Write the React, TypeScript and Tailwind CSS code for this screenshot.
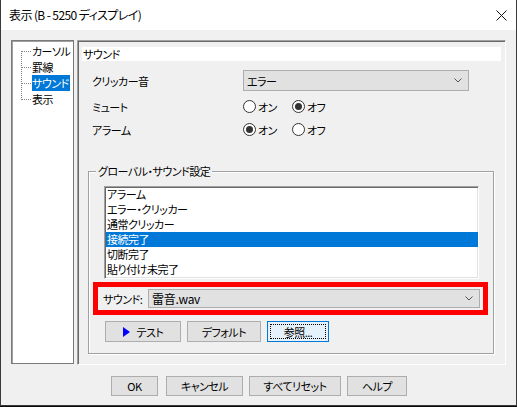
import React from "react";

function Chevron() {
  return (
    <svg width="8" height="5" viewBox="0 0 8 5" className="shrink-0">
      <polyline points="0.5,0.5 4,4 7.5,0.5" fill="none" stroke="#555" strokeWidth="1" />
    </svg>
  );
}

function Radio({ checked, label }: { checked: boolean; label: string }) {
  return (
    <div className="flex items-center w-[49px] shrink-0">
      <span className="w-[13px] h-[13px] rounded-full border border-[#333] bg-white flex items-center justify-center shrink-0">
        {checked && <span className="w-[7px] h-[7px] rounded-full bg-[#333]" />}
      </span>
      <span className="ml-[2px] leading-[14px] whitespace-nowrap">{label}</span>
    </div>
  );
}

function TreeRow({ label, pos, selected }: { label: string; pos: "first" | "mid" | "last"; selected?: boolean }) {
  const y1 = pos === "first" ? 8 : 0;
  const y2 = pos === "last" ? 9 : 16;
  return (
    <div className="flex items-center h-[16px]">
      <svg width="19" height="16" viewBox="0 0 19 16" className="shrink-0" shapeRendering="crispEdges">
        <line x1="8.5" y1={y1} x2="8.5" y2={y2} stroke="#808080" strokeDasharray="1 1" />
        <line x1="9" y1="8.5" x2="19" y2="8.5" stroke="#808080" strokeDasharray="1 1" />
      </svg>
      <span
        className={
          "h-[16px] leading-[16px] whitespace-nowrap pr-[1px] " +
          (selected ? "bg-[#0078d7] text-white" : "")
        }
      >
        {label}
      </span>
    </div>
  );
}

function Btn({ w, children, className }: { w: string; children: React.ReactNode; className?: string }) {
  return (
    <div
      className={
        "h-[20px] border border-[#adadad] bg-[#e1e1e1] flex items-center justify-center leading-[14px] whitespace-nowrap shrink-0 " +
        w +
        " " +
        (className ?? "")
      }
    >
      {children}
    </div>
  );
}

export default function App() {
  const listItems = ["アラーム", "エラー・クリッカー", "通常クリッカー", "接続完了", "切断完了", "貼り付け未完了"];
  return (
    <div className="w-[517px] h-[407px] bg-[#0b0b0b] overflow-hidden font-['Noto_Sans_CJK_JP',sans-serif] text-[11px] tracking-[-0.5px] text-black [font-feature-settings:'palt'_1]">
      <div className="h-[406px] flex flex-col bg-[#f0f0f0] border-x border-b border-[#3a3a3a]">
        {/* title bar */}
        <div className="h-[30px] bg-white flex items-center pl-[8px] pr-[9px] shrink-0">
          <span className="leading-[14px] flex-1 whitespace-nowrap text-[12px] tracking-[-0.6px]">表示 (B - 5250 ディスプレイ)</span>
          <svg width="11" height="11" viewBox="0 0 11 11">
            <line x1="0.5" y1="0.5" x2="10.5" y2="10.5" stroke="#111" strokeWidth="1" />
            <line x1="10.5" y1="0.5" x2="0.5" y2="10.5" stroke="#111" strokeWidth="1" />
          </svg>
        </div>

        {/* body */}
        <div className="flex pt-[10px] px-[10px] gap-[3px]">
          {/* tree */}
          <div className="w-[63px] h-[324px] bg-white border border-[#7a7a7a] shadow-[inset_1px_1px_0_#a0a0a0] pt-[2px] pl-[1px] shrink-0 overflow-hidden">
            <TreeRow label="カーソル" pos="first" />
            <TreeRow label="罫線" pos="mid" />
            <TreeRow label="サウンド" pos="mid" selected />
            <TreeRow label="表示" pos="last" />
          </div>

          {/* panel */}
          <div className="w-[429px] h-[325px] border border-t-[#a0a0a0] border-l-[#a0a0a0] border-r-white border-b-white shadow-[inset_1px_1px_0_#696969] px-[4px] pt-[6px] shrink-0 flex flex-col">
            <div className="h-[14px] bg-white leading-[14px] pl-[1px]">サウンド</div>

            <div className="flex items-center h-[21px] mt-[9px] pl-[10px]">
              <span className="w-[151px] leading-[14px] shrink-0">クリッカー音</span>
              <div className="w-[226px] h-[21px] border border-[#adadad] bg-[#e1e1e1] flex items-center pl-[3px] pr-[6px]">
                <span className="flex-1 leading-[14px]">エラー</span>
                <Chevron />
              </div>
            </div>

            <div className="flex items-center h-[21px] mt-[5px] pl-[10px]">
              <span className="w-[151px] leading-[14px] shrink-0">ミュート</span>
              <Radio checked={false} label="オン" />
              <Radio checked label="オフ" />
            </div>

            <div className="flex items-center h-[21px] mt-[2px] pl-[10px]">
              <span className="w-[151px] leading-[14px] shrink-0">アラーム</span>
              <Radio checked label="オン" />
              <Radio checked={false} label="オフ" />
            </div>

            <fieldset className="mt-[24px] ml-[6px] w-[406px] border border-[#a0a0a0] shadow-[inset_1px_1px_0_#fff,1px_1px_0_#fff] pl-[15px] pr-[14px] pb-[11px]">
              <legend className="ml-[-8px] px-[2px] leading-[14px] bg-[#f0f0f0]">グローバル・サウンド設定</legend>

              <div className="mt-[8px] h-[93px] bg-white border border-t-[#a0a0a0] border-l-[#a0a0a0] border-r-white border-b-white shadow-[inset_1px_1px_0_#696969,inset_-1px_-1px_0_#e3e3e3] pl-[1px] overflow-hidden">
                {listItems.map((it, i) => (
                  <div
                    key={it}
                    className={
                      "h-[15px] leading-[15px] pl-[1px] whitespace-nowrap " +
                      (i === 3 ? "bg-[#0078d7] text-white" : "")
                    }
                  >
                    {it}
                  </div>
                ))}
              </div>

              <div className="mt-[3px] -ml-[11px] -mr-[9px] h-[33px] border-[5px] border-[#ff0000] flex items-center pl-[5px] pr-[3px]">
                <span className="w-[45px] leading-[14px] shrink-0 whitespace-nowrap">サウンド:</span>
                <div className="flex-1 h-[19px] border border-[#adadad] bg-[#e1e1e1] flex items-center pl-[3px] pr-[6px]">
                  <span className="flex-1 leading-[15px] text-[12px] tracking-[-0.3px]">雷音.wav</span>
                  <Chevron />
                </div>
              </div>

              <div className="flex mt-[6px] ml-[1px] gap-[6px]">
                <Btn w="w-[76px] h-[21px] gap-[7px]">
                  <svg width="7" height="10" viewBox="0 0 7 10">
                    <polygon points="0,0 7,5 0,10" fill="#0000ff" />
                  </svg>
                  <span>テスト</span>
                </Btn>
                <Btn w="w-[74px] h-[21px]">デフォルト</Btn>
                <div className="w-[62px] h-[21px] border border-[#0078d7] bg-[#e5f1fb] p-[2px] shrink-0">
                  <div className="h-full border border-dotted border-black flex items-center justify-center leading-[14px]">
                    参照...
                  </div>
                </div>
              </div>
            </fieldset>
          </div>
        </div>

        {/* bottom buttons */}
        <div className="flex pl-[110px] mt-[11px]">
          <Btn w="w-[47px]">OK</Btn>
          <Btn w="w-[77px]" className="ml-[8px]">キャンセル</Btn>
          <Btn w="w-[92px]" className="ml-[6px]">すべてリセット</Btn>
          <Btn w="w-[60px]" className="ml-[6px]">ヘルプ</Btn>
        </div>
      </div>
    </div>
  );
}
